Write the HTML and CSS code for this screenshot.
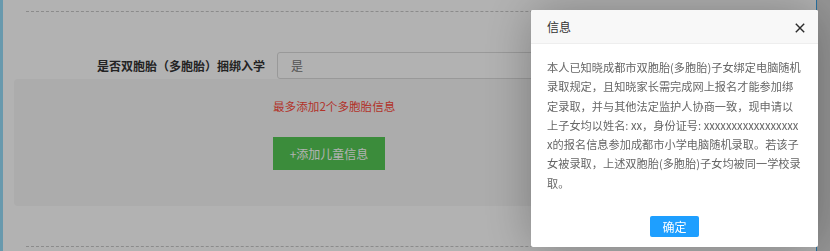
FILE: index.html
```html
<!DOCTYPE html>
<html lang="zh-CN">
<head>
<meta charset="utf-8">
<title>信息</title>
<link rel="stylesheet" href="styles.css">
</head>
<body>
<div class="page">
  <div class="form">
    <div class="dash"></div>
    <div class="row">
      <label class="label">是否双胞胎（多胞胎）捆绑入学</label>
      <div class="select">是</div>
    </div>
    <div class="child-box">
      <p class="tip">最多添加2个多胞胎信息</p>
      <button class="add-btn" type="button">+添加儿童信息</button>
    </div>
    <div class="dash dash-bottom"></div>
  </div>
</div>
<div class="shade"></div>
<div class="layer">
  <div class="layer-title">信息
    <span class="layer-close"><svg width="10" height="10" viewBox="0 0 10 10"><path d="M0.8 0.8 L9.2 9.2 M9.2 0.8 L0.8 9.2" stroke="#2b2b2b" stroke-width="1.4" fill="none"/></svg></span>
  </div>
  <div class="layer-content">本人已知晓成都市双胞胎(多胞胎)子女绑定电脑随机录取规定，且知晓家长需完成网上报名才能参加绑定录取，并与其他法定监护人协商一致，现申请以上子女均以姓名: xx，身份证号: xxxxxxxxxxxxxxxxxx的报名信息参加成都市小学电脑随机录取。若该子女被录取，上述双胞胎(多胞胎)子女均被同一学校录取。</div>
  <div class="layer-btn"><a class="btn-ok">确定</a></div>
</div>
</body>
</html>
```

FILE: styles.css
```css
html, body {
  margin: 0;
  padding: 0;
}
body {
  background: #d8d8d8;
  font-family: "Noto Sans CJK SC", "Noto Sans", sans-serif;
  width: 830px;
  height: 251px;
  overflow: hidden;
}
.page {
  width: 813px;
  height: 251px;
  background: #ffffff;
  border-left: 3px solid #96dcf8;
  border-right: 1px solid #3ca4e8;
}
.form {
  padding-top: 11px;
}
.dash {
  margin: 0 23px;
  border-top: 1px dashed #c8c8c8;
}
.row {
  display: flex;
  align-items: center;
  margin-top: 40px;
  height: 27px;
}
.label {
  width: 262px;
  padding-right: 12px;
  box-sizing: border-box;
  text-align: right;
  font-size: 12px;
  font-weight: bold;
  color: #333;
  width: 274px;
}
.select {
  flex: 1;
  margin-right: 24px;
  height: 27px;
  box-sizing: border-box;
  border: 1px solid #dcdcdc;
  border-radius: 3px;
  padding-left: 13px;
  line-height: 25px;
  font-size: 12px;
  color: #777;
  background: #fff;
}
.child-box {
  margin: 0 14px 0 11px;
  height: 127px;
  box-sizing: border-box;
  background: #f6f6f6;
  border-radius: 4px;
  padding: 18px 0 0 259px;
}
.tip {
  margin: 0;
  font-size: 11.6px;
  line-height: 18px;
  color: #ff4a3c;
}
.add-btn {
  display: block;
  margin-top: 22px;
  width: 112px;
  height: 33px;
  border: none;
  border-radius: 0;
  background: #55c955;
  color: #fff;
  font-family: inherit;
  font-size: 12px;
  padding: 0;
}
.dash-bottom {
  margin-top: 40px;
}
.shade {
  position: fixed;
  inset: 0;
  background: rgba(0, 0, 0, 0.3);
}
.layer {
  position: fixed;
  left: 531px;
  top: 10px;
  width: 287px;
  background: #fff;
  border-radius: 2px;
  box-shadow: 1px 1px 50px rgba(0, 0, 0, 0.3);
}
.layer-title {
  position: relative;
  height: 33px;
  line-height: 33px;
  padding: 0 80px 0 16px;
  background: #f8f8f8;
  border-bottom: 1px solid #eee;
  border-radius: 2px 2px 0 0;
  font-size: 12px;
  color: #333;
}
.layer-close {
  position: absolute;
  right: 13px;
  top: 13px;
  width: 10px;
  height: 10px;
  line-height: 0;
}
.layer-content {
  padding: 14px 16px 0 16px;
  font-size: 11.2px;
  line-height: 19.3px;
  color: #666;
  word-break: break-all;
}
.layer-btn {
  text-align: center;
  padding: 20px 0 10px;
}
.btn-ok {
  display: inline-block;
  height: 21px;
  line-height: 21px;
  padding: 0 12px;
  background: #1e9fff;
  color: #fff;
  font-size: 12px;
  border-radius: 2px;
}
```
